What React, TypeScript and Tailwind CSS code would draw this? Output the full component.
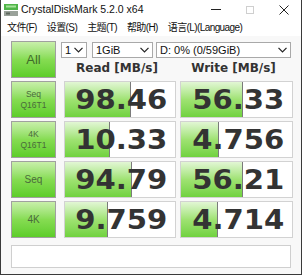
import React from "react";

const rows = [
  { label: ["Seq", "Q16T1"], read: "98.46", write: "56.33", rw: 66, ww: 62 },
  { label: ["4K", "Q16T1"], read: "10.33", write: "4.756", rw: 45, ww: 38 },
  { label: ["Seq"], read: "94.79", write: "56.21", rw: 67, ww: 62 },
  { label: ["4K"], read: "9.759", write: "4.714", rw: 43, ww: 37 },
];

function Chevron() {
  return (
    <svg width="9" height="6" viewBox="0 0 9 6" className="shrink-0">
      <polyline points="0.5,0.8 4.5,5 8.5,0.8" fill="none" stroke="#222" strokeWidth="1.2" />
    </svg>
  );
}

function Select({ text, w }: { text: string; w: string }) {
  return (
    <div className={`${w} h-[16px] bg-white border border-[#a9a9a9] flex items-center justify-between pl-[3px] pr-[3px] text-[11px] leading-none text-[#111]`}>
      <span>{text}</span>
      <Chevron />
    </div>
  );
}

function GreenButton({ children }: { children: React.ReactNode }) {
  return (
    <div className="w-[45px] h-[37px] shrink-0 border border-[#a0a0a0] bg-gradient-to-b from-[#c8efaa] via-[#86dc52] to-[#5ccd28] flex flex-col items-center justify-center">
      {children}
    </div>
  );
}

function Cell({ value, bar, w }: { value: string; bar: number; w: string }) {
  return (
    <div className={`${w} h-[37px] shrink-0 relative bg-white border border-[#d2d2d2] overflow-hidden`}>
      <div
        className="absolute left-0 top-0 bottom-0 bg-gradient-to-b from-[#e2f6d4] via-[#9fe272] to-[#70d23e] border-r border-[#7a7a7a]"
        style={{ width: bar }}
      />
      <div className="relative h-full flex items-center justify-end pr-[8px]">
        <span
          className="inline-block origin-right scale-x-[1.12] text-[26px] font-bold leading-none text-[#333333]"
          style={{ fontFamily: '"DejaVu Sans", sans-serif' }}
        >
          {value}
        </span>
      </div>
    </div>
  );
}

export default function App() {
  return (
    <div
      className="w-[302px] h-[275px] bg-[#f8f8f8] border-x border-b border-[#3a3a3a] flex flex-col overflow-hidden"
      style={{ fontFamily: '"Liberation Sans", "Noto Sans CJK SC", sans-serif' }}
    >
      {/* Title bar */}
      <div className="h-[19px] bg-white flex items-center shrink-0">
        <svg width="14" height="12" viewBox="0 0 14 12" className="ml-[3px] mr-[3px]">
          <rect x="0" y="0" width="14" height="6" fill="#4fb548" />
          <rect x="2" y="1.5" width="10" height="2" fill="#a6e39a" />
          <rect x="0" y="7" width="14" height="5" fill="#9aa29a" />
          <rect x="2" y="8.5" width="4" height="2" fill="#5d665d" />
        </svg>
        <span className="text-[10.5px] text-[#111] leading-none">CrystalDiskMark 5.2.0 x64</span>
        <div className="flex-1" />
        <div className="w-[34px] flex justify-center">
          <div className="w-[10px] h-px bg-[#222]" />
        </div>
        <div className="w-[34px] flex justify-center">
          <div className="w-[8px] h-[8px] border border-[#cfcfcf]" />
        </div>
        <div className="w-[34px] flex justify-center">
          <svg width="10" height="10" viewBox="0 0 10 10">
            <path d="M0.5 0.5 L9.5 9.5 M9.5 0.5 L0.5 9.5" stroke="#222" strokeWidth="1" />
          </svg>
        </div>
      </div>

      {/* Menu bar */}
      <div className="h-[17px] bg-white flex items-center gap-[10px] pl-[6px] text-[10px] leading-none text-[#111] shrink-0 tracking-[-0.6px]">
        <span>文件(F)</span>
        <span>设置(S)</span>
        <span>主题(T)</span>
        <span>帮助(H)</span>
        <span>语言(L)(Language)</span>
      </div>

      {/* Content */}
      <div className="flex flex-col gap-[3px] px-[10px] pt-[5px]">
        <div className="flex gap-[4px]">
          <GreenButton>
            <span className="text-[13px] text-[#3f6a2a] leading-none">All</span>
          </GreenButton>
          <div className="flex flex-col ml-[1px]">
            <div className="flex items-center mt-[1px]">
              <Select text="1" w="w-[26px]" />
              <div className="w-[5px]" />
              <Select text="1GiB" w="w-[61px]" />
              <div className="w-[3px]" />
              <Select text="D: 0% (0/59GiB)" w="w-[135px]" />
            </div>
            <div
              className="flex mt-[4px] text-[12px] font-bold text-[#333] leading-none"
              style={{ fontFamily: '"DejaVu Sans", sans-serif' }}
            >
              <div className="w-[112px] text-center">Read [MB/s]</div>
              <div className="w-[4px]" />
              <div className="w-[113px] text-center">Write [MB/s]</div>
            </div>
          </div>
        </div>

        {rows.map((r, i) => (
          <div key={i} className="flex gap-[4px]">
            <GreenButton>
              {r.label.map((l, j) => (
                <span
                  key={j}
                  className={`${r.label.length === 1 ? "text-[10px]" : "text-[8.5px]"} text-[#4a6a3c] leading-[11px]`}
                >
                  {l}
                </span>
              ))}
            </GreenButton>
            <div className="w-px" />
            <Cell value={r.read} bar={r.rw} w="w-[112px]" />
            <Cell value={r.write} bar={r.ww} w="w-[113px]" />
          </div>
        ))}

        <div className="mt-[4px] h-[23px] bg-white border border-[#cfcfcf]" />
      </div>
    </div>
  );
}
